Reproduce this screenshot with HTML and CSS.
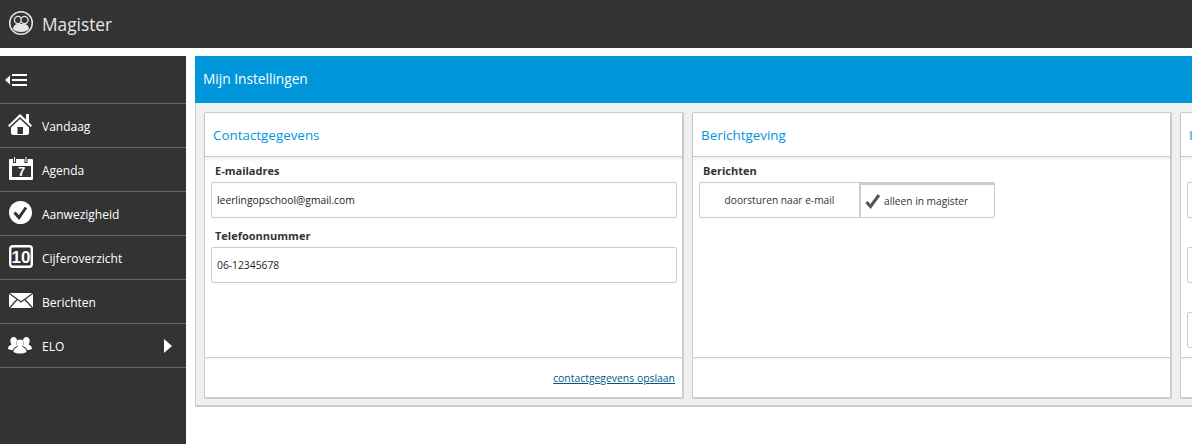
FILE: index.html
```html
<!DOCTYPE html>
<html lang="nl">
<head>
    <meta charset="UTF-8">
    <title>Magister</title>
    <link rel="stylesheet" href="styles.css">
</head>
<body>

    <!-- Header -->
    <header class="topbar">
        <svg class="logo" width="26" height="26" viewBox="0 0 26 26">
            <circle cx="13" cy="13" r="11.300" fill="#333" stroke="#e6e6e6" stroke-width="1.500"/>
            <path fill="#e6e6e6" d="M5 19c0-3 2-4.500 4.500-5h7c2.500.5 4.500 2 4.500 5-1.500 1.800-4.500 3-8 3s-6.500-1.200-8-3z"/>
            <circle cx="10" cy="10" r="3.600" fill="#333" stroke="#e6e6e6" stroke-width="1.300"/>
            <circle cx="16.500" cy="10" r="3.600" fill="#333" stroke="#e6e6e6" stroke-width="1.300"/>
        </svg>
        <span class="brand">Magister</span>
    </header>

    <div class="layout">

        <!-- Sidebar -->
        <nav class="sidebar">
            <div class="menu-toggle">
                <svg width="24" height="14" viewBox="0 0 24 14">
                    <path fill="#fff" d="M6 2.500v9L1 7zM8 1h15v2H8zM8 6h15v2H8zM8 11h15v2H8z"/>
                </svg>
            </div>
            <a class="menu-item">
                <svg width="26" height="27" viewBox="0 0 26 27">
                    <path fill="#fff" d="M0 13.500 12 2l6 5.500V2h3v8.300l3 3.200-1.400 1.500L12 5 1.400 15z"/>
                    <path fill="#fff" fill-rule="evenodd" d="M12 7l9 8.500V21a2 2 0 0 1-2 2H5a2 2 0 0 1-2-2v-5.500zM9.500 15v7H15v-7z"/>
                </svg>
                <span>Vandaag</span>
            </a>
            <a class="menu-item">
                <svg width="26" height="27" viewBox="0 0 26 27">
                    <path fill="#fff" fill-rule="evenodd" d="M2 3h22a1 1 0 0 1 1 1v19a1 1 0 0 1-1 1H2a1 1 0 0 1-1-1V4a1 1 0 0 1 1-1zM4 10v11h19V10z"/>
                    <path fill="#333" d="M5 2h3v5H5zM16.500 2h3v5h-3z"/>
                    <path fill="#fff" d="M6 1h1v5H6zM17.500 1h1v5h-1z"/>
                    <text class="cal-day" x="13.500" y="20">7</text>
                </svg>
                <span>Agenda</span>
            </a>
            <a class="menu-item">
                <svg width="26" height="27" viewBox="0 0 26 27">
                    <circle cx="12.500" cy="12.500" r="11.500" fill="#fff"/>
                    <path fill="none" stroke="#333" stroke-width="3" d="M6.500 12.500l4.500 5L18 7.500"/>
                </svg>
                <span>Aanwezigheid</span>
            </a>
            <a class="menu-item">
                <svg width="26" height="27" viewBox="0 0 26 27">
                    <rect x="2.200" y="2.200" width="21.600" height="20.600" rx="2.500" fill="none" stroke="#fff" stroke-width="2.400"/>
                    <text class="grade" x="13" y="19">10</text>
                </svg>
                <span>Cijferoverzicht</span>
            </a>
            <a class="menu-item">
                <svg width="26" height="27" viewBox="0 0 26 27">
                    <rect x="1" y="5" width="24" height="15" fill="#fff"/>
                    <path fill="none" stroke="#333" stroke-width="1.200" d="M0 4.500 13 14 26 4.500M1 20.500l8.500-9.500M25 20.500 16.500 11"/>
                </svg>
                <span>Berichten</span>
            </a>
            <a class="menu-item">
                <svg width="26" height="27" viewBox="0 0 26 27">
                    <path fill="#fff" d="M0 17c0-3 2-3.500 3.500-4.500-.8-1-1.200-2.300-1.200-3.500C2.300 6.800 3.500 5 5.500 5S9 6.500 9 8.500c-1 1.500-.8 4 .5 5.500C7 15 5.500 15.500 5 18 3 18 1 17.500 0 17zM24 17c0-3-2-3.500-3.500-4.500.8-1 1.200-2.300 1.200-3.500 0-2.200-1.200-4-3.200-4S15 6.500 15 8.500c1 1.500.8 4-.5 5.500 2.500 1 4 1.500 4.500 4 2 0 4-.5 5-1z"/>
                    <path fill="#fff" d="M5.500 20c0-3.500 2.500-4 4.500-5.500-1-1.200-1.500-2.500-1.500-3.800C8.500 8.500 10 7.500 12 7.500s3.500 1 3.500 3.200c0 1.300-.5 2.600-1.500 3.800 2 1.500 4.500 2 4.500 5.500-2 1-4 1.500-6.500 1.500s-4.500-.5-6.500-1.500z"/>
                </svg>
                <span>ELO</span>
                <i class="arrow"></i>
            </a>
        </nav>

        <!-- Content -->
        <main class="content">
            <h1 class="page-title">Mijn Instellingen</h1>
            <div class="cards">

                <section class="card">
                    <h2 class="card-title">Contactgegevens</h2>
                    <div class="card-body">
                        <label class="field-label first">E-mailadres</label>
                        <div class="field">leerlingopschool@gmail.com</div>
                        <label class="field-label">Telefoonnummer</label>
                        <div class="field">06-12345678</div>
                    </div>
                    <div class="card-foot"><a class="save-link">contactgegevens opslaan</a></div>
                </section>

                <section class="card">
                    <h2 class="card-title">Berichtgeving</h2>
                    <div class="card-body">
                        <label class="field-label first">Berichten</label>
                        <div class="switch">
                            <div class="switch-opt">doorsturen naar e-mail</div>
                            <div class="switch-opt active">
                                <svg width="16" height="16" viewBox="0 0 16 16">
                                    <path fill="none" stroke="#555" stroke-width="3" d="M1.500 9l4 4.500L14 2"/>
                                </svg>
                                alleen in magister
                            </div>
                        </div>
                    </div>
                    <div class="card-foot"></div>
                </section>

                <section class="card">
                    <h2 class="card-title">I</h2>
                    <div class="card-body">
                        <div class="field-label first"></div>
                        <div class="field"></div>
                        <div class="field-label"></div>
                        <div class="field"></div>
                        <div class="field-label"></div>
                        <div class="field"></div>
                    </div>
                    <div class="card-foot"></div>
                </section>

            </div>
        </main>
    </div>

</body>
</html>
```

FILE: styles.css
```css
/* General Reset */
html, body {
    height: 100%;
}
body {
    margin: 0;
    overflow: hidden;
    background-color: #fff;
    color: #333;
    font-family: "Open Sans", "Noto Sans", sans-serif;
}

/* Header */
.topbar {
    display: flex;
    align-items: center;
    height: 48px;
    padding-left: 8px;
    background-color: #333;
    color: #e6e6e6;
}
.logo {
    margin-right: 8px;
    margin-top: -2px;
}
.brand {
    font-size: 17.300px;
}

.layout {
    display: flex;
    height: 388px;
    margin-top: 8px;
}

/* Sidebar */
.sidebar {
    flex: 0 0 186px;
    background-color: #333;
    color: #fff;
}
.menu-toggle {
    display: flex;
    align-items: center;
    height: 47px;
    padding-left: 4px;
    border-bottom: 1px solid #666;
}
.menu-item {
    display: flex;
    align-items: center;
    height: 43px;
    padding-left: 8px;
    border-bottom: 1px solid #666;
    font-size: 12px;
}
.menu-item svg {
    margin-right: 8px;
}
.menu-item span {
    padding-top: 2px;
}
.cal-day {
    fill: #fff;
    font-family: "Liberation Sans", sans-serif;
    font-size: 13px;
    font-weight: 700;
    text-anchor: middle;
}
.grade {
    fill: #fff;
    font-family: "Liberation Sans", sans-serif;
    font-size: 17px;
    font-weight: 700;
    text-anchor: middle;
}
.arrow {
    width: 0;
    height: 0;
    margin-left: auto;
    margin-right: 14px;
    border-left: 8px solid #fff;
    border-top: 7px solid transparent;
    border-bottom: 7px solid transparent;
}

/* Content */
.content {
    flex: 1;
    min-width: 0;
    margin-left: 9px;
}
.page-title {
    height: 47px;
    margin: 0;
    padding-left: 8px;
    background-color: #0096db;
    color: #fff;
    font-size: 13.700px;
    font-weight: 400;
    line-height: 46px;
}
.cards {
    display: flex;
    gap: 8px;
    height: 304px;
    padding: 9px 0 0 8px;
    background-color: #f0f0f0;
    border-left: 1px solid #ccc;
    border-bottom: 2px solid #ccc;
    box-sizing: border-box;
    overflow: hidden;
}
.card {
    display: flex;
    flex: 0 0 480px;
    flex-direction: column;
    height: 287px;
    box-sizing: border-box;
    background-color: #fff;
    border: 1px solid #ccc;
    border-bottom-width: 2px;
    border-right-width: 2px;
    border-radius: 2px;
}
.card-title {
    height: 43px;
    margin: 0;
    padding-left: 8px;
    border-bottom: 1px solid #ccc;
    box-shadow: 0 2px 3px rgba(0, 0, 0, 0.08);
    color: #0096db;
    font-size: 13.400px;
    font-weight: 400;
    line-height: 44px;
}
.card-body {
    flex: 1;
    padding: 0 5px 0 6px;
}
.field-label {
    display: block;
    height: 25px;
    margin-top: 4px;
    padding-left: 4px;
    font-size: 11px;
    font-weight: 700;
    line-height: 28px;
}
.field-label.first {
    margin-top: 0;
}
.field {
    height: 34px;
    padding-left: 5px;
    border: 1px solid #ccc;
    border-radius: 2px;
    color: #222;
    font-size: 10.300px;
    line-height: 34px;
}
.card-foot {
    height: 39px;
    text-align: right;
    border-top: 1px solid #ccc;
    box-shadow: inset 0 2px 2px rgba(0, 0, 0, 0.03);
}
.save-link {
    display: inline-block;
    margin: 13px 7px 0 0;
    color: #005a87;
    font-size: 10.400px;
    text-decoration: underline;
}

/* Switch */
.switch {
    display: flex;
    width: 296px;
    height: 36px;
    box-sizing: border-box;
    border: 1px solid #ccc;
    border-radius: 2px;
    font-size: 10.200px;
}
.switch-opt {
    display: flex;
    align-items: center;
    justify-content: center;
    width: 159px;
}
.switch-opt.active {
    flex: 1;
    gap: 3px;
    justify-content: flex-start;
    padding-left: 4px;
    border-left: 2px solid #ccc;
    border-top: 2px solid #ccc;
}
```
